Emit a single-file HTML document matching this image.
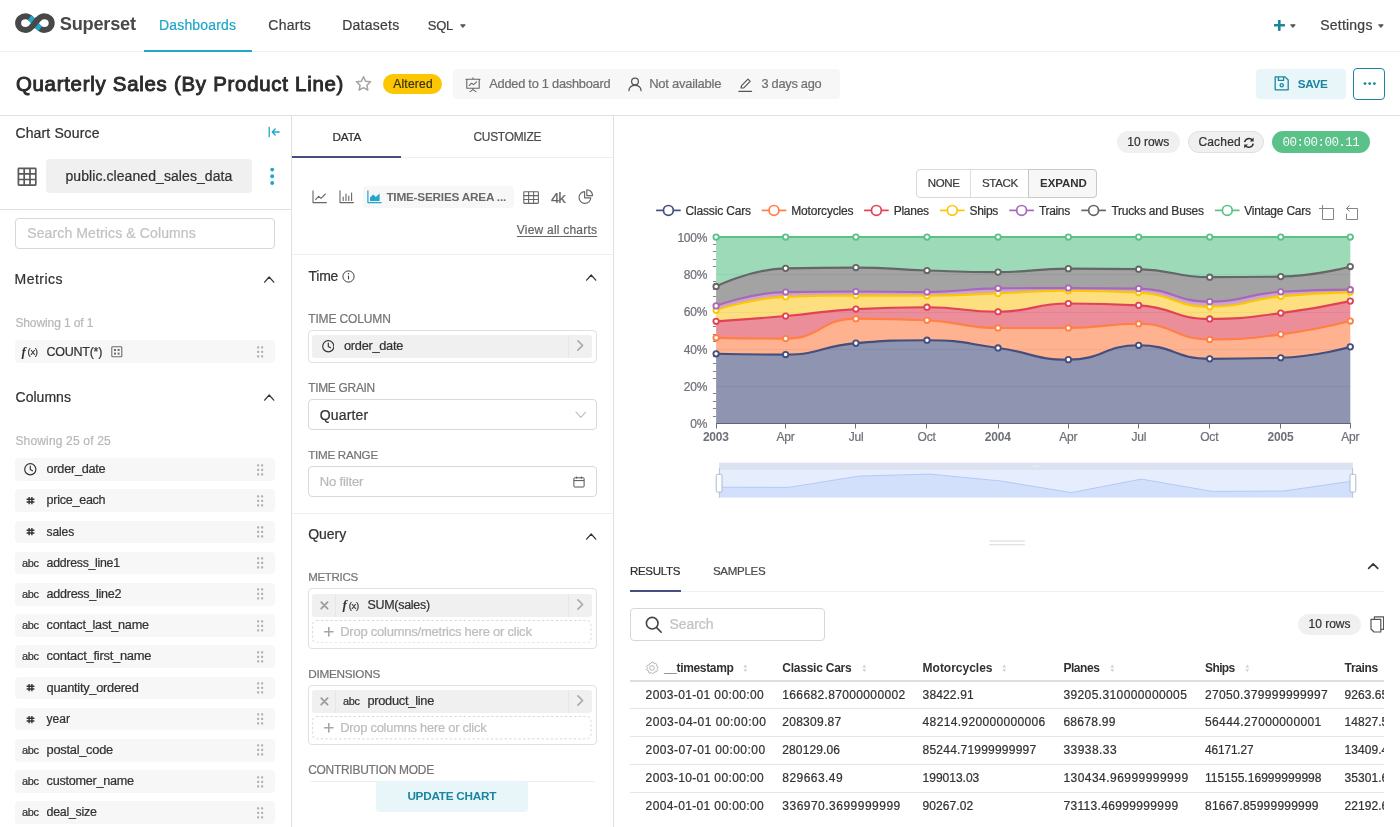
<!DOCTYPE html>
<html lang="en"><head><meta charset="utf-8"><title>Quarterly Sales (By Product Line) - Superset</title>
<style>
*{box-sizing:content-box;margin:0;padding:0}
html,body{width:1400px;height:827px;overflow:hidden;background:#fff}
body{position:relative;will-change:transform;font-family:"Liberation Sans",sans-serif;font-size:14px;color:#323232;-webkit-font-smoothing:antialiased}
.b{position:absolute;display:block}
.t{position:absolute;white-space:nowrap;display:block}
.s{-webkit-text-stroke:0.22px currentColor}
.clip{overflow:hidden}
</style></head>
<body>
<!-- s_nav.nav -->
<div class="b" style="left:0px;top:0px;width:1400px;height:51px;background:#fff;"></div>
<div class="b" style="left:0px;top:51px;width:1400px;height:1px;background:#f0f0f0;"></div>
<svg class="b" style="left:15px;top:13px;" width="40" height="20" viewBox="0 0 40 20"><g fill="none" stroke-width="6" stroke-linecap="butt"><path stroke="#484848" d="M19.9 10.1 C16.5 5.2 14 3.2 10.6 3.2 C6.4 3.2 3.1 6.2 3.1 10.1 C3.1 14 6.4 17 10.6 17 C14 17 16.5 15 19.9 10.1 C23.3 5.2 25.8 3.2 29.2 3.2 C33.4 3.2 36.7 6.2 36.7 10.1 C36.7 14 33.4 17 29.2 17 C25.8 17 23.3 15 19.9 10.1 Z"/><path stroke="#20a7c9" d="M14.6 4.6 C16.4 5.9 18 7.6 19.9 10.1 C21.8 12.6 23.4 14.3 25.2 15.6"/><path stroke="#484848" d="M16.6 13.9 C17.7 12.9 18.7 11.7 19.9 10.1 C21.1 8.5 22.1 7.3 23.2 6.3"/></g></svg>
<span class="t" style="left:59.80px;top:13.00px;font-size:18.24px;line-height:21px;color:#484848;font-weight:700;letter-spacing:-0.265px;">Superset</span>
<span class="t s" style="left:159.00px;top:17.00px;font-size:14px;line-height:16px;color:#20a7c9;letter-spacing:0.168px;">Dashboards</span>
<span class="t s" style="left:268.30px;top:17.00px;font-size:14px;line-height:16px;color:#404040;letter-spacing:0.253px;">Charts</span>
<span class="t s" style="left:342.20px;top:17.00px;font-size:14px;line-height:16px;color:#404040;letter-spacing:0.250px;">Datasets</span>
<span class="t s" style="left:427.80px;top:18.00px;font-size:13.04px;line-height:15px;color:#404040;letter-spacing:-0.314px;">SQL</span>
<svg class="b" style="left:459.6px;top:23.5px;" width="8" height="6" viewBox="0 0 8 6"><path d="M0.6 0.8 h4.6 l-2.3 2.7 z" fill="#555" stroke="#555" stroke-width="1" stroke-linejoin="round"/></svg>
<div class="b" style="left:144px;top:50px;width:108px;height:2px;background:#20a7c9;"></div>
<svg class="b" style="left:1273.5px;top:19.5px;" width="11" height="11" viewBox="0 0 11 11"><path d="M5.3 0.6 V10 M0.6 5.3 H10" stroke="#1a85a0" stroke-width="2.6" stroke-linecap="round" fill="none"/></svg>
<svg class="b" style="left:1290.2px;top:23.5px;" width="8" height="6" viewBox="0 0 8 6"><path d="M0.6 0.8 h4.6 l-2.3 2.7 z" fill="#555" stroke="#555" stroke-width="1" stroke-linejoin="round"/></svg>
<span class="t s" style="left:1320.20px;top:17.00px;font-size:14px;line-height:16px;color:#404040;letter-spacing:0.231px;">Settings</span>
<svg class="b" style="left:1378.4px;top:23.5px;" width="8" height="6" viewBox="0 0 8 6"><path d="M0.6 0.8 h4.6 l-2.3 2.7 z" fill="#555" stroke="#555" stroke-width="1" stroke-linejoin="round"/></svg>
<!-- s_nav.header -->
<div class="b" style="left:0px;top:52px;width:1400px;height:63px;background:#fff;"></div>
<div class="b" style="left:0px;top:115px;width:1400px;height:1px;background:#e0e0e0;"></div>
<span class="t" style="left:15.90px;top:73.00px;font-size:20.4px;line-height:22px;color:#2b2b2b;letter-spacing:0.743px;-webkit-text-stroke:0.95px #2b2b2b;">Quarterly Sales (By Product Line)</span>
<svg class="b" style="left:355px;top:75px;" width="17" height="17" viewBox="0 0 17 17"><path d="M8.5 1.7 L10.6 6.2 L15.5 6.8 L11.9 10.2 L12.8 15.1 L8.5 12.7 L4.2 15.1 L5.1 10.2 L1.5 6.8 L6.4 6.2 Z" fill="none" stroke="#a3a3a3" stroke-width="1.5" stroke-linejoin="round"/></svg>
<div class="b" style="left:383px;top:74px;width:59px;height:20px;background:#fcc700;border-radius:10px;"></div>
<span class="t s" style="left:393.20px;top:77.00px;font-size:12px;line-height:14px;color:#3a3112;letter-spacing:0.242px;">Altered</span>
<div class="b" style="left:453px;top:69px;width:387px;height:30px;background:#f7f7f7;border-radius:4px;"></div>
<svg class="b" style="left:465px;top:76.5px;" width="16" height="16" viewBox="0 0 16 16"><g fill="none" stroke="#666" stroke-width="1.1" stroke-linecap="round" stroke-linejoin="round"><path d="M8 0.7 V2.2 M1 2.2 H15 M1.8 2.2 V11.2 H14.2 V2.2 M8 11.2 V12.6 M8 12.6 L5 14.6 M8 12.6 L11 14.6"/><path d="M4.3 8.4 L6.6 6.2 L8.6 7.6 L11.6 4.8"/></g></svg>
<span class="t s" style="left:489.30px;top:76.00px;font-size:12.81px;line-height:15px;color:#707070;letter-spacing:-0.248px;">Added to 1 dashboard</span>
<svg class="b" style="left:627.6px;top:77px;" width="14" height="15" viewBox="0 0 14 15"><g fill="none" stroke="#555" stroke-width="1.25" stroke-linecap="round" stroke-linejoin="round"><circle cx="7" cy="4.4" r="3.4"/><path d="M0.9 13.6 C1.2 10.2 3.8 8.4 7 8.4 C10.2 8.4 12.8 10.2 13.1 13.6"/></g></svg>
<span class="t s" style="left:649.20px;top:76.00px;font-size:13px;line-height:15px;color:#707070;letter-spacing:-0.244px;">Not available</span>
<svg class="b" style="left:738px;top:77.6px;" width="15" height="15" viewBox="0 0 15 15"><g fill="none" stroke="#555" stroke-width="1.2" stroke-linecap="round" stroke-linejoin="round"><path d="M3 10 L3.6 7.6 L10 1.2 L12.2 3.4 L5.8 9.8 Z M0.8 13.3 H13.6"/></g></svg>
<span class="t s" style="left:761.40px;top:76.00px;font-size:12.81px;line-height:15px;color:#707070;letter-spacing:-0.255px;">3 days ago</span>
<div class="b" style="left:1256px;top:69px;width:89.5px;height:30px;background:#e9f6f9;border-radius:4px;"></div>
<svg class="b" style="left:1274px;top:75.8px;" width="16" height="15" viewBox="0 0 16 15"><g fill="none" stroke="#1a85a0" stroke-width="1.3" stroke-linejoin="round"><path d="M1.2 0.9 H11 L14.2 4 V13.8 H1.2 Z M4.4 0.9 V4.4 H9.6 V0.9"/><circle cx="7.7" cy="9.2" r="1.6"/></g></svg>
<span class="t" style="left:1297.70px;top:77.00px;font-size:11.72px;line-height:13px;color:#1a85a0;font-weight:700;letter-spacing:-0.309px;">SAVE</span>
<div class="b" style="left:1353px;top:68px;width:32px;height:32px;background:#fff;border-radius:4px;border:1px solid #1a85a0;box-sizing:border-box;"></div>
<svg class="b" style="left:1362.5px;top:82.3px;" width="14" height="4" viewBox="0 0 14 4"><circle cx="2" cy="1.6" r="1.4" fill="#1a85a0"/><circle cx="6.7" cy="1.6" r="1.4" fill="#1a85a0"/><circle cx="11.4" cy="1.6" r="1.4" fill="#1a85a0"/></svg>
<!-- s_left.left -->
<div class="b" style="left:0px;top:116px;width:291px;height:711px;background:#fff;"></div>
<div class="b" style="left:291px;top:116px;width:1px;height:711px;background:#e0e0e0;"></div>
<span class="t s" style="left:15.40px;top:125.00px;font-size:14px;line-height:16px;color:#323232;letter-spacing:0.146px;">Chart Source</span>
<svg class="b" style="left:268.3px;top:126.1px;" width="14" height="12" viewBox="0 0 14 12"><path d="M1.2 1.4 V10.6 M11.2 6 H4.4 M7.2 3 L4.2 6 L7.2 9" fill="none" stroke="#20a7c9" stroke-width="1.3" stroke-linecap="round" stroke-linejoin="round"/></svg>
<svg class="b" style="left:16.5px;top:167px;" width="20" height="19.5" viewBox="0 0 20 19.5"><g fill="none" stroke="#595959" stroke-width="1.7"><rect x="1.4" y="1.3" width="17.4" height="16.8" rx="0.6"/><path d="M7.2 1.3 V18.1 M13 1.3 V18.1 M1.4 6.9 H18.8 M1.4 12.5 H18.8"/></g></svg>
<div class="b" style="left:46px;top:159px;width:206px;height:33.5px;background:#f0f0f0;border-radius:4px;"></div>
<span class="t s" style="left:65.50px;top:168.00px;font-size:14px;line-height:16px;color:#323232;letter-spacing:0.074px;">public.cleaned_sales_data</span>
<svg class="b" style="left:269.5px;top:167.2px;" width="5" height="19" viewBox="0 0 5 19"><circle cx="2.2" cy="2.6" r="1.95" fill="#20a7c9"/><circle cx="2.2" cy="9.3" r="1.95" fill="#20a7c9"/><circle cx="2.2" cy="16" r="1.95" fill="#20a7c9"/></svg>
<div class="b" style="left:0px;top:209px;width:291px;height:1px;background:#e0e0e0;"></div>
<div class="b" style="left:15px;top:218px;width:258px;height:29px;background:#fff;border-radius:4px;border:1px solid #d6d6de;"></div>
<span class="t s" style="left:27.20px;top:225.00px;font-size:14px;line-height:16px;color:#c2c2c2;letter-spacing:0.125px;">Search Metrics &amp; Columns</span>
<span class="t s" style="left:14.60px;top:271.00px;font-size:14px;line-height:16px;color:#323232;letter-spacing:0.448px;">Metrics</span>
<svg class="b" style="left:263.4px;top:274.6px;" width="12.4" height="8.6" viewBox="0 0 12.4 8.6"><path d="M1.62 7.20 L6.20 1.98 L10.78 7.20" fill="none" stroke="#323232" stroke-width="1.23" stroke-linecap="round" stroke-linejoin="round"/></svg>
<span class="t s" style="left:15.40px;top:316.00px;font-size:12px;line-height:14px;color:#b8b8b8;letter-spacing:-0.101px;">Showing 1 of 1</span>
<div class="b" style="left:15px;top:340px;width:260px;height:23px;background:#f7f7f7;border-radius:4px;"></div>
<span class="t" style="left:21.40px;top:344.00px;font-size:13px;line-height:15px;color:#323232;font-weight:700;font-style:italic;font-family:'Liberation Serif',serif;">f</span><span class="t s" style="left:27.60px;top:346.00px;font-size:9.6px;line-height:11px;color:#323232;letter-spacing:-0.396px;">(x)</span>
<span class="t s" style="left:46.60px;top:345.00px;font-size:12.51px;line-height:14px;color:#323232;letter-spacing:-0.267px;">COUNT(*)</span>
<svg class="b" style="left:110.6px;top:345.6px;" width="12" height="12" viewBox="0 0 12 12"><g fill="none" stroke="#6c6c6c" stroke-width="1.1"><rect x="0.8" y="0.8" width="10" height="10" rx="0.8"/></g><g fill="#6c6c6c"><rect x="3" y="3" width="2" height="2"/><rect x="6.6" y="3" width="2" height="2"/><rect x="3" y="6.6" width="2" height="2"/><rect x="6.6" y="6.6" width="2" height="2"/></g></svg>
<svg class="b" style="left:256.8px;top:345.6px;" width="7" height="12" viewBox="0 0 7 12"><rect x="0.1" y="0.3" width="2.1" height="2.1" rx="0.6" fill="#aeaeae"/><rect x="0.1" y="4.8" width="2.1" height="2.1" rx="0.6" fill="#aeaeae"/><rect x="0.1" y="9.3" width="2.1" height="2.1" rx="0.6" fill="#aeaeae"/><rect x="4.1" y="0.3" width="2.1" height="2.1" rx="0.6" fill="#aeaeae"/><rect x="4.1" y="4.8" width="2.1" height="2.1" rx="0.6" fill="#aeaeae"/><rect x="4.1" y="9.3" width="2.1" height="2.1" rx="0.6" fill="#aeaeae"/></svg>
<span class="t s" style="left:15.50px;top:389.00px;font-size:14px;line-height:16px;color:#323232;letter-spacing:0.026px;">Columns</span>
<svg class="b" style="left:263.4px;top:392.9px;" width="12.4" height="8.6" viewBox="0 0 12.4 8.6"><path d="M1.62 7.20 L6.20 1.98 L10.78 7.20" fill="none" stroke="#323232" stroke-width="1.23" stroke-linecap="round" stroke-linejoin="round"/></svg>
<span class="t s" style="left:15.40px;top:434.00px;font-size:12px;line-height:14px;color:#b8b8b8;letter-spacing:0.169px;">Showing 25 of 25</span>
<div class="b" style="left:15px;top:458.2px;width:260px;height:22.5px;background:#f7f7f7;border-radius:4px;"></div>
<svg class="b" style="left:24px;top:463.2px;" width="12.6" height="12.6" viewBox="0 0 12.6 12.6"><g fill="none" stroke="#323232" stroke-width="1.15" stroke-linecap="round" stroke-linejoin="round"><circle cx="6.3" cy="6.3" r="5.6"/><path d="M6.3 3.2 V6.5 L8.5 7.8"/></g></svg>
<span class="t s" style="left:46.60px;top:461.00px;font-size:12.71px;line-height:15px;color:#323232;letter-spacing:-0.264px;">order_date</span>
<svg class="b" style="left:256.8px;top:463.59999999999997px;" width="7" height="12" viewBox="0 0 7 12"><rect x="0.1" y="0.3" width="2.1" height="2.1" rx="0.6" fill="#aeaeae"/><rect x="0.1" y="4.8" width="2.1" height="2.1" rx="0.6" fill="#aeaeae"/><rect x="0.1" y="9.3" width="2.1" height="2.1" rx="0.6" fill="#aeaeae"/><rect x="4.1" y="0.3" width="2.1" height="2.1" rx="0.6" fill="#aeaeae"/><rect x="4.1" y="4.8" width="2.1" height="2.1" rx="0.6" fill="#aeaeae"/><rect x="4.1" y="9.3" width="2.1" height="2.1" rx="0.6" fill="#aeaeae"/></svg>
<div class="b" style="left:15px;top:489.4px;width:260px;height:22.5px;background:#f7f7f7;border-radius:4px;"></div>
<svg class="b" style="left:26px;top:496.2px;" width="9" height="9" viewBox="0 0 9 9"><path d="M3.1 0.9 V8.3 M5.9 0.9 V8.3 M0.6 3.2 H8.4 M0.6 6 H8.4" fill="none" stroke="#323232" stroke-width="1.4"/></svg>
<span class="t s" style="left:46.60px;top:493.00px;font-size:12.57px;line-height:14px;color:#323232;letter-spacing:-0.274px;">price_each</span>
<svg class="b" style="left:256.8px;top:494.79999999999995px;" width="7" height="12" viewBox="0 0 7 12"><rect x="0.1" y="0.3" width="2.1" height="2.1" rx="0.6" fill="#aeaeae"/><rect x="0.1" y="4.8" width="2.1" height="2.1" rx="0.6" fill="#aeaeae"/><rect x="0.1" y="9.3" width="2.1" height="2.1" rx="0.6" fill="#aeaeae"/><rect x="4.1" y="0.3" width="2.1" height="2.1" rx="0.6" fill="#aeaeae"/><rect x="4.1" y="4.8" width="2.1" height="2.1" rx="0.6" fill="#aeaeae"/><rect x="4.1" y="9.3" width="2.1" height="2.1" rx="0.6" fill="#aeaeae"/></svg>
<div class="b" style="left:15px;top:520.6px;width:260px;height:22.5px;background:#f7f7f7;border-radius:4px;"></div>
<svg class="b" style="left:26px;top:527.4px;" width="9" height="9" viewBox="0 0 9 9"><path d="M3.1 0.9 V8.3 M5.9 0.9 V8.3 M0.6 3.2 H8.4 M0.6 6 H8.4" fill="none" stroke="#323232" stroke-width="1.4"/></svg>
<span class="t s" style="left:46.60px;top:525.00px;font-size:12.05px;line-height:14px;color:#323232;letter-spacing:-0.125px;">sales</span>
<svg class="b" style="left:256.8px;top:526.0px;" width="7" height="12" viewBox="0 0 7 12"><rect x="0.1" y="0.3" width="2.1" height="2.1" rx="0.6" fill="#aeaeae"/><rect x="0.1" y="4.8" width="2.1" height="2.1" rx="0.6" fill="#aeaeae"/><rect x="0.1" y="9.3" width="2.1" height="2.1" rx="0.6" fill="#aeaeae"/><rect x="4.1" y="0.3" width="2.1" height="2.1" rx="0.6" fill="#aeaeae"/><rect x="4.1" y="4.8" width="2.1" height="2.1" rx="0.6" fill="#aeaeae"/><rect x="4.1" y="9.3" width="2.1" height="2.1" rx="0.6" fill="#aeaeae"/></svg>
<div class="b" style="left:15px;top:551.8px;width:260px;height:22.5px;background:#f7f7f7;border-radius:4px;"></div>
<span class="t s" style="left:22.10px;top:557.00px;font-size:10.99px;line-height:12px;color:#323232;letter-spacing:-0.359px;">abc</span>
<span class="t s" style="left:46.60px;top:556.00px;font-size:12.34px;line-height:14px;color:#323232;letter-spacing:-0.275px;">address_line1</span>
<svg class="b" style="left:256.8px;top:557.1999999999999px;" width="7" height="12" viewBox="0 0 7 12"><rect x="0.1" y="0.3" width="2.1" height="2.1" rx="0.6" fill="#aeaeae"/><rect x="0.1" y="4.8" width="2.1" height="2.1" rx="0.6" fill="#aeaeae"/><rect x="0.1" y="9.3" width="2.1" height="2.1" rx="0.6" fill="#aeaeae"/><rect x="4.1" y="0.3" width="2.1" height="2.1" rx="0.6" fill="#aeaeae"/><rect x="4.1" y="4.8" width="2.1" height="2.1" rx="0.6" fill="#aeaeae"/><rect x="4.1" y="9.3" width="2.1" height="2.1" rx="0.6" fill="#aeaeae"/></svg>
<div class="b" style="left:15px;top:583.0px;width:260px;height:22.5px;background:#f7f7f7;border-radius:4px;"></div>
<span class="t s" style="left:22.10px;top:588.00px;font-size:10.99px;line-height:12px;color:#323232;letter-spacing:-0.359px;">abc</span>
<span class="t s" style="left:46.60px;top:587.00px;font-size:12.55px;line-height:14px;color:#323232;letter-spacing:-0.270px;">address_line2</span>
<svg class="b" style="left:256.8px;top:588.4px;" width="7" height="12" viewBox="0 0 7 12"><rect x="0.1" y="0.3" width="2.1" height="2.1" rx="0.6" fill="#aeaeae"/><rect x="0.1" y="4.8" width="2.1" height="2.1" rx="0.6" fill="#aeaeae"/><rect x="0.1" y="9.3" width="2.1" height="2.1" rx="0.6" fill="#aeaeae"/><rect x="4.1" y="0.3" width="2.1" height="2.1" rx="0.6" fill="#aeaeae"/><rect x="4.1" y="4.8" width="2.1" height="2.1" rx="0.6" fill="#aeaeae"/><rect x="4.1" y="9.3" width="2.1" height="2.1" rx="0.6" fill="#aeaeae"/></svg>
<div class="b" style="left:15px;top:614.2px;width:260px;height:22.5px;background:#f7f7f7;border-radius:4px;"></div>
<span class="t s" style="left:22.10px;top:619.00px;font-size:10.99px;line-height:12px;color:#323232;letter-spacing:-0.359px;">abc</span>
<span class="t s" style="left:46.60px;top:618.00px;font-size:12.7px;line-height:14px;color:#323232;letter-spacing:-0.253px;">contact_last_name</span>
<svg class="b" style="left:256.8px;top:619.6px;" width="7" height="12" viewBox="0 0 7 12"><rect x="0.1" y="0.3" width="2.1" height="2.1" rx="0.6" fill="#aeaeae"/><rect x="0.1" y="4.8" width="2.1" height="2.1" rx="0.6" fill="#aeaeae"/><rect x="0.1" y="9.3" width="2.1" height="2.1" rx="0.6" fill="#aeaeae"/><rect x="4.1" y="0.3" width="2.1" height="2.1" rx="0.6" fill="#aeaeae"/><rect x="4.1" y="4.8" width="2.1" height="2.1" rx="0.6" fill="#aeaeae"/><rect x="4.1" y="9.3" width="2.1" height="2.1" rx="0.6" fill="#aeaeae"/></svg>
<div class="b" style="left:15px;top:645.4px;width:260px;height:22.5px;background:#f7f7f7;border-radius:4px;"></div>
<span class="t s" style="left:22.10px;top:650.00px;font-size:10.99px;line-height:12px;color:#323232;letter-spacing:-0.359px;">abc</span>
<span class="t s" style="left:46.60px;top:648.00px;font-size:12.92px;line-height:15px;color:#323232;letter-spacing:-0.245px;">contact_first_name</span>
<svg class="b" style="left:256.8px;top:650.8px;" width="7" height="12" viewBox="0 0 7 12"><rect x="0.1" y="0.3" width="2.1" height="2.1" rx="0.6" fill="#aeaeae"/><rect x="0.1" y="4.8" width="2.1" height="2.1" rx="0.6" fill="#aeaeae"/><rect x="0.1" y="9.3" width="2.1" height="2.1" rx="0.6" fill="#aeaeae"/><rect x="4.1" y="0.3" width="2.1" height="2.1" rx="0.6" fill="#aeaeae"/><rect x="4.1" y="4.8" width="2.1" height="2.1" rx="0.6" fill="#aeaeae"/><rect x="4.1" y="9.3" width="2.1" height="2.1" rx="0.6" fill="#aeaeae"/></svg>
<div class="b" style="left:15px;top:676.6px;width:260px;height:22.5px;background:#f7f7f7;border-radius:4px;"></div>
<svg class="b" style="left:26px;top:683.4px;" width="9" height="9" viewBox="0 0 9 9"><path d="M3.1 0.9 V8.3 M5.9 0.9 V8.3 M0.6 3.2 H8.4 M0.6 6 H8.4" fill="none" stroke="#323232" stroke-width="1.4"/></svg>
<span class="t s" style="left:46.60px;top:680.00px;font-size:12.8px;line-height:15px;color:#323232;letter-spacing:-0.255px;">quantity_ordered</span>
<svg class="b" style="left:256.8px;top:682.0px;" width="7" height="12" viewBox="0 0 7 12"><rect x="0.1" y="0.3" width="2.1" height="2.1" rx="0.6" fill="#aeaeae"/><rect x="0.1" y="4.8" width="2.1" height="2.1" rx="0.6" fill="#aeaeae"/><rect x="0.1" y="9.3" width="2.1" height="2.1" rx="0.6" fill="#aeaeae"/><rect x="4.1" y="0.3" width="2.1" height="2.1" rx="0.6" fill="#aeaeae"/><rect x="4.1" y="4.8" width="2.1" height="2.1" rx="0.6" fill="#aeaeae"/><rect x="4.1" y="9.3" width="2.1" height="2.1" rx="0.6" fill="#aeaeae"/></svg>
<div class="b" style="left:15px;top:707.8px;width:260px;height:22.5px;background:#f7f7f7;border-radius:4px;"></div>
<svg class="b" style="left:26px;top:714.5999999999999px;" width="9" height="9" viewBox="0 0 9 9"><path d="M3.1 0.9 V8.3 M5.9 0.9 V8.3 M0.6 3.2 H8.4 M0.6 6 H8.4" fill="none" stroke="#323232" stroke-width="1.4"/></svg>
<span class="t s" style="left:46.60px;top:712.00px;font-size:12.04px;line-height:14px;color:#323232;letter-spacing:-0.033px;">year</span>
<svg class="b" style="left:256.8px;top:713.1999999999999px;" width="7" height="12" viewBox="0 0 7 12"><rect x="0.1" y="0.3" width="2.1" height="2.1" rx="0.6" fill="#aeaeae"/><rect x="0.1" y="4.8" width="2.1" height="2.1" rx="0.6" fill="#aeaeae"/><rect x="0.1" y="9.3" width="2.1" height="2.1" rx="0.6" fill="#aeaeae"/><rect x="4.1" y="0.3" width="2.1" height="2.1" rx="0.6" fill="#aeaeae"/><rect x="4.1" y="4.8" width="2.1" height="2.1" rx="0.6" fill="#aeaeae"/><rect x="4.1" y="9.3" width="2.1" height="2.1" rx="0.6" fill="#aeaeae"/></svg>
<div class="b" style="left:15px;top:739.0px;width:260px;height:22.5px;background:#f7f7f7;border-radius:4px;"></div>
<span class="t s" style="left:22.10px;top:744.00px;font-size:10.99px;line-height:12px;color:#323232;letter-spacing:-0.359px;">abc</span>
<span class="t s" style="left:46.60px;top:742.00px;font-size:12.82px;line-height:15px;color:#323232;letter-spacing:-0.257px;">postal_code</span>
<svg class="b" style="left:256.8px;top:744.4px;" width="7" height="12" viewBox="0 0 7 12"><rect x="0.1" y="0.3" width="2.1" height="2.1" rx="0.6" fill="#aeaeae"/><rect x="0.1" y="4.8" width="2.1" height="2.1" rx="0.6" fill="#aeaeae"/><rect x="0.1" y="9.3" width="2.1" height="2.1" rx="0.6" fill="#aeaeae"/><rect x="4.1" y="0.3" width="2.1" height="2.1" rx="0.6" fill="#aeaeae"/><rect x="4.1" y="4.8" width="2.1" height="2.1" rx="0.6" fill="#aeaeae"/><rect x="4.1" y="9.3" width="2.1" height="2.1" rx="0.6" fill="#aeaeae"/></svg>
<div class="b" style="left:15px;top:770.2px;width:260px;height:22.5px;background:#f7f7f7;border-radius:4px;"></div>
<span class="t s" style="left:22.10px;top:775.00px;font-size:10.99px;line-height:12px;color:#323232;letter-spacing:-0.359px;">abc</span>
<span class="t s" style="left:46.60px;top:774.00px;font-size:12.65px;line-height:14px;color:#323232;letter-spacing:-0.259px;">customer_name</span>
<svg class="b" style="left:256.8px;top:775.6px;" width="7" height="12" viewBox="0 0 7 12"><rect x="0.1" y="0.3" width="2.1" height="2.1" rx="0.6" fill="#aeaeae"/><rect x="0.1" y="4.8" width="2.1" height="2.1" rx="0.6" fill="#aeaeae"/><rect x="0.1" y="9.3" width="2.1" height="2.1" rx="0.6" fill="#aeaeae"/><rect x="4.1" y="0.3" width="2.1" height="2.1" rx="0.6" fill="#aeaeae"/><rect x="4.1" y="4.8" width="2.1" height="2.1" rx="0.6" fill="#aeaeae"/><rect x="4.1" y="9.3" width="2.1" height="2.1" rx="0.6" fill="#aeaeae"/></svg>
<div class="b" style="left:15px;top:801.4px;width:260px;height:22.5px;background:#f7f7f7;border-radius:4px;"></div>
<span class="t s" style="left:22.10px;top:806.00px;font-size:10.99px;line-height:12px;color:#323232;letter-spacing:-0.359px;">abc</span>
<span class="t s" style="left:46.60px;top:805.00px;font-size:12.43px;line-height:14px;color:#323232;letter-spacing:-0.284px;">deal_size</span>
<svg class="b" style="left:256.8px;top:806.8px;" width="7" height="12" viewBox="0 0 7 12"><rect x="0.1" y="0.3" width="2.1" height="2.1" rx="0.6" fill="#aeaeae"/><rect x="0.1" y="4.8" width="2.1" height="2.1" rx="0.6" fill="#aeaeae"/><rect x="0.1" y="9.3" width="2.1" height="2.1" rx="0.6" fill="#aeaeae"/><rect x="4.1" y="0.3" width="2.1" height="2.1" rx="0.6" fill="#aeaeae"/><rect x="4.1" y="4.8" width="2.1" height="2.1" rx="0.6" fill="#aeaeae"/><rect x="4.1" y="9.3" width="2.1" height="2.1" rx="0.6" fill="#aeaeae"/></svg>
<!-- s_mid.mid -->
<div class="b" style="left:292px;top:116px;width:321px;height:711px;background:#fff;"></div>
<div class="b" style="left:613px;top:116px;width:1px;height:711px;background:#e0e0e0;"></div>
<div class="b" style="left:292px;top:157px;width:321px;height:1px;background:#f0f0f0;"></div>
<div class="b" style="left:292px;top:156px;width:109px;height:2px;background:#454e7c;"></div>
<span class="t s" style="left:332.60px;top:130.00px;font-size:11.81px;line-height:14px;color:#2f2f2f;letter-spacing:-0.280px;">DATA</span>
<span class="t s" style="left:473.50px;top:130.00px;font-size:11.91px;line-height:14px;color:#4a4a4a;letter-spacing:-0.257px;">CUSTOMIZE</span>
<svg class="b" style="left:311.6px;top:190.2px;" width="15.5" height="14" viewBox="0 0 15.5 14"><g fill="none" stroke="#666" stroke-width="1.1" stroke-linecap="round" stroke-linejoin="round"><path d="M1 0.8 V12.6 H14.4"/><path d="M3.6 9.6 L6.6 6.4 L9 8.4 L13.4 4"/></g></svg>
<svg class="b" style="left:339.4px;top:190.2px;" width="15.5" height="14" viewBox="0 0 15.5 14"><g fill="none" stroke="#666" stroke-width="1.1" stroke-linecap="round"><path d="M1 0.8 V12.6 H14.4" stroke-linejoin="round"/><path d="M4.2 10.4 V7 M7 10.4 V4 M9.8 10.4 V6 M12.6 10.4 V3"/></g></svg>
<div class="b" style="left:362.8px;top:186px;width:151.6px;height:22.2px;background:#f7f7f7;border-radius:4px;"></div>
<svg class="b" style="left:366.6px;top:190.2px;" width="15" height="14" viewBox="0 0 15 14"><path d="M0.9 0.8 V12.6 H14.2" fill="none" stroke="#20a7c9" stroke-width="1.2" stroke-linecap="round" stroke-linejoin="round"/><path d="M3 11 V7.6 L6.2 4.4 L8.8 7 L12.6 3.4 V11 Z" fill="#20a7c9"/></svg>
<span class="t" style="left:386.40px;top:190.00px;font-size:11.82px;line-height:14px;color:#6a6a6a;font-weight:700;letter-spacing:-0.246px;">TIME-SERIES AREA ...</span>
<svg class="b" style="left:523px;top:190.6px;" width="16.4" height="13.4" viewBox="0 0 16.4 13.4"><g fill="none" stroke="#666" stroke-width="1.1"><rect x="0.8" y="0.8" width="14.6" height="11.6" rx="0.6"/><path d="M0.8 4.6 H15.4 M0.8 8.5 H15.4 M5.6 0.8 V12.4 M10.6 0.8 V12.4"/></g></svg>
<span class="t s" style="left:551.00px;top:189.00px;font-size:14.97px;line-height:17px;color:#666;letter-spacing:-1.025px;">4k</span>
<svg class="b" style="left:578.4px;top:189.4px;" width="16" height="16" viewBox="0 0 16 16"><g fill="none" stroke="#666" stroke-width="1.15" stroke-linejoin="round"><path d="M6.6 2.6 A5.9 5.9 0 1 0 12.8 8.8 H6.6 Z"/><path d="M8.8 0.8 A5.9 5.9 0 0 1 14.6 6.6 H8.8 Z"/></g></svg>
<span class="t s" style="left:516.80px;top:223.00px;font-size:12px;line-height:14px;color:#666;letter-spacing:0.218px;text-decoration:underline;text-underline-offset:2px;">View all charts</span>
<div class="b" style="left:292px;top:254px;width:321px;height:1px;background:#f0f0f0;"></div>
<span class="t s" style="left:308.60px;top:268.00px;font-size:13.98px;line-height:16px;color:#323232;letter-spacing:-0.251px;">Time</span>
<svg class="b" style="left:342px;top:270px;" width="13" height="13" viewBox="0 0 13 13"><g fill="none" stroke="#3a3a3a" stroke-width="1"><circle cx="6.5" cy="6.5" r="5.6"/></g><path d="M6.5 5.6 V9.4" stroke="#3a3a3a" stroke-width="1.1" fill="none"/><circle cx="6.5" cy="3.8" r="0.7" fill="#3a3a3a"/></svg>
<svg class="b" style="left:585px;top:273.2px;" width="12.4" height="8.6" viewBox="0 0 12.4 8.6"><path d="M1.62 7.20 L6.20 1.98 L10.78 7.20" fill="none" stroke="#323232" stroke-width="1.23" stroke-linecap="round" stroke-linejoin="round"/></svg>
<span class="t s" style="left:308.20px;top:312.00px;font-size:12px;line-height:14px;color:#757575;letter-spacing:-0.133px;">TIME COLUMN</span>
<div class="b" style="left:307.5px;top:330px;width:287px;height:30.6px;background:#fff;border-radius:4px;border:1px solid #e0e0e0;"></div>
<div class="b" style="left:312.2px;top:335px;width:279.6px;height:23px;background:#f0f0f0;border-radius:3px;"></div>
<div class="b" style="left:568px;top:335px;width:1px;height:23px;background:#e7e7e7;"></div>
<svg class="b" style="left:576.0px;top:339.2px;" width="9" height="14" viewBox="0 0 9 14"><path d="M1.9 1.9 L6.6 6.5 L1.9 11.1" fill="none" stroke="#a8a8a8" stroke-width="1.6" stroke-linecap="round" stroke-linejoin="round"/></svg>
<svg class="b" style="left:321.8px;top:340px;" width="12.6" height="12.6" viewBox="0 0 12.6 12.6"><g fill="none" stroke="#323232" stroke-width="1.15" stroke-linecap="round" stroke-linejoin="round"><circle cx="6.3" cy="6.3" r="5.6"/><path d="M6.3 3.2 V6.5 L8.5 7.8"/></g></svg>
<span class="t s" style="left:344.00px;top:338.00px;font-size:12.75px;line-height:15px;color:#323232;letter-spacing:-0.264px;">order_date</span>
<span class="t s" style="left:308.20px;top:381.00px;font-size:11.88px;line-height:14px;color:#757575;letter-spacing:-0.255px;">TIME GRAIN</span>
<div class="b" style="left:307.5px;top:399.3px;width:287px;height:28.4px;background:#fff;border-radius:4px;border:1px solid #d9d9d9;"></div>
<span class="t s" style="left:319.80px;top:407.00px;font-size:14px;line-height:16px;color:#323232;letter-spacing:0.133px;">Quarter</span>
<svg class="b" style="left:575px;top:410.6px;" width="12" height="8" viewBox="0 0 12 8"><path d="M1 1.2 L5.8 6.4 L10.6 1.2" fill="none" stroke="#bdbdbd" stroke-width="1.1" stroke-linecap="round" stroke-linejoin="round"/></svg>
<span class="t s" style="left:308.20px;top:448.00px;font-size:11.64px;line-height:13px;color:#757575;letter-spacing:-0.265px;">TIME RANGE</span>
<div class="b" style="left:307.5px;top:466.4px;width:287px;height:28.4px;background:#fff;border-radius:4px;border:1px solid #d9d9d9;"></div>
<span class="t s" style="left:319.80px;top:474.00px;font-size:13px;line-height:15px;color:#b9b9b9;letter-spacing:-0.157px;">No filter</span>
<svg class="b" style="left:572.6px;top:476px;" width="12" height="12" viewBox="0 0 12 12"><g fill="none" stroke="#555" stroke-width="1"><rect x="0.9" y="1.8" width="10.2" height="9.2" rx="0.8"/><path d="M0.9 4.6 H11.1 M3.6 0.6 V2.6 M8.4 0.6 V2.6"/></g></svg>
<div class="b" style="left:292px;top:513px;width:321px;height:1px;background:#f0f0f0;"></div>
<span class="t s" style="left:308.20px;top:526.00px;font-size:14px;line-height:16px;color:#323232;letter-spacing:-0.031px;">Query</span>
<svg class="b" style="left:585px;top:531.6px;" width="12.4" height="8.6" viewBox="0 0 12.4 8.6"><path d="M1.62 7.20 L6.20 1.98 L10.78 7.20" fill="none" stroke="#323232" stroke-width="1.23" stroke-linecap="round" stroke-linejoin="round"/></svg>
<span class="t s" style="left:308.20px;top:571.00px;font-size:11.49px;line-height:12px;color:#757575;letter-spacing:-0.303px;">METRICS</span>
<div class="b" style="left:307.5px;top:588.2px;width:287px;height:58.8px;background:#fff;border-radius:4px;border:1px solid #e0e0e0;"></div>
<div class="b" style="left:312.2px;top:593.8px;width:279.6px;height:23px;background:#f0f0f0;border-radius:3px;"></div>
<div class="b" style="left:568px;top:593.8px;width:1px;height:23px;background:#e7e7e7;"></div>
<svg class="b" style="left:576.0px;top:598.0px;" width="9" height="14" viewBox="0 0 9 14"><path d="M1.9 1.9 L6.6 6.5 L1.9 11.1" fill="none" stroke="#a8a8a8" stroke-width="1.6" stroke-linecap="round" stroke-linejoin="round"/></svg>
<div class="b" style="left:335px;top:593.8px;width:1px;height:23px;background:#e7e7e7;"></div>
<svg class="b" style="left:319.5px;top:600.8px;" width="9" height="9" viewBox="0 0 9 9"><path d="M1.2 1.2 L7.6 7.6 M7.6 1.2 L1.2 7.6" fill="none" stroke="#9a9a9a" stroke-width="1.7" stroke-linecap="round"/></svg>
<span class="t" style="left:342.60px;top:597.00px;font-size:13px;line-height:15px;color:#323232;font-weight:700;font-style:italic;font-family:'Liberation Serif',serif;">f</span><span class="t s" style="left:348.80px;top:600.00px;font-size:9.6px;line-height:11px;color:#323232;letter-spacing:-0.396px;">(x)</span>
<span class="t s" style="left:367.40px;top:598.00px;font-size:12.48px;line-height:14px;color:#323232;letter-spacing:-0.263px;">SUM(sales)</span>
<svg class="b" style="left:312.4px;top:620px;" width="279.6" height="23.4" viewBox="0 0 279.6 23.4"><rect x="0.5" y="0.5" width="278.6" height="22.4" rx="4" fill="none" stroke="#d9d9d9" stroke-width="1" stroke-dasharray="2.4 2.2"/></svg>
<svg class="b" style="left:324.2px;top:627px;" width="10" height="10" viewBox="0 0 10 10"><path d="M4.8 0.6 V9 M0.6 4.8 H9" fill="none" stroke="#a6a6a6" stroke-width="1.6" stroke-linecap="round"/></svg>
<span class="t s" style="left:340.20px;top:624.00px;font-size:13px;line-height:15px;color:#bdbdbd;letter-spacing:-0.233px;">Drop columns/metrics here or click</span>
<span class="t s" style="left:308.20px;top:667.00px;font-size:11.75px;line-height:13px;color:#757575;letter-spacing:-0.265px;">DIMENSIONS</span>
<div class="b" style="left:307.5px;top:684.6px;width:287px;height:58.6px;background:#fff;border-radius:4px;border:1px solid #e0e0e0;"></div>
<div class="b" style="left:312.2px;top:689.6px;width:279.6px;height:23px;background:#f0f0f0;border-radius:3px;"></div>
<div class="b" style="left:568px;top:689.6px;width:1px;height:23px;background:#e7e7e7;"></div>
<svg class="b" style="left:576.0px;top:693.8000000000001px;" width="9" height="14" viewBox="0 0 9 14"><path d="M1.9 1.9 L6.6 6.5 L1.9 11.1" fill="none" stroke="#a8a8a8" stroke-width="1.6" stroke-linecap="round" stroke-linejoin="round"/></svg>
<div class="b" style="left:335px;top:689.6px;width:1px;height:23px;background:#e7e7e7;"></div>
<svg class="b" style="left:319.5px;top:696.6px;" width="9" height="9" viewBox="0 0 9 9"><path d="M1.2 1.2 L7.6 7.6 M7.6 1.2 L1.2 7.6" fill="none" stroke="#9a9a9a" stroke-width="1.7" stroke-linecap="round"/></svg>
<span class="t s" style="left:343.00px;top:695.00px;font-size:10.99px;line-height:12px;color:#323232;letter-spacing:-0.359px;">abc</span>
<span class="t s" style="left:367.40px;top:693.00px;font-size:12.81px;line-height:15px;color:#323232;letter-spacing:-0.255px;">product_line</span>
<svg class="b" style="left:312.4px;top:716.4px;" width="279.6" height="23.4" viewBox="0 0 279.6 23.4"><rect x="0.5" y="0.5" width="278.6" height="22.4" rx="4" fill="none" stroke="#d9d9d9" stroke-width="1" stroke-dasharray="2.4 2.2"/></svg>
<svg class="b" style="left:324.2px;top:723.4px;" width="10" height="10" viewBox="0 0 10 10"><path d="M4.8 0.6 V9 M0.6 4.8 H9" fill="none" stroke="#a6a6a6" stroke-width="1.6" stroke-linecap="round"/></svg>
<span class="t s" style="left:340.20px;top:720.00px;font-size:12.9px;line-height:15px;color:#bdbdbd;letter-spacing:-0.246px;">Drop columns here or click</span>
<span class="t s" style="left:308.20px;top:763.00px;font-size:11.94px;line-height:14px;color:#757575;letter-spacing:-0.251px;">CONTRIBUTION MODE</span>
<div class="b" style="left:307.5px;top:780.6px;width:287px;height:30px;background:#fff;border-radius:4px;border:1px solid #ececec;"></div>
<div class="b" style="left:292px;top:781.6px;width:321px;height:46px;background:#fff;"></div>
<div class="b" style="left:376.4px;top:781px;width:151.8px;height:31px;background:#e9f6f9;border-radius:4px;"></div>
<span class="t" style="left:407.40px;top:789.00px;font-size:11.76px;line-height:13px;color:#1a85a0;font-weight:700;letter-spacing:-0.258px;">UPDATE CHART</span>
<!-- s_right.right -->
<div class="b" style="left:614px;top:116px;width:786px;height:711px;background:#fff;"></div>
<div class="b" style="left:1116.6px;top:131px;width:63.2px;height:22px;background:#f0f0f0;border-radius:11px;"></div>
<span class="t s" style="left:1127.30px;top:135.00px;font-size:12px;line-height:14px;color:#323232;letter-spacing:-0.020px;">10 rows</span>
<div class="b" style="left:1187.6px;top:131px;width:74.6px;height:20px;background:#f0f0f0;border-radius:11px;border:1px solid #e0e0e0;"></div>
<span class="t s" style="left:1198.40px;top:135.00px;font-size:12px;line-height:14px;color:#323232;letter-spacing:0.182px;">Cached</span>
<svg class="b" style="left:1243.4px;top:136.6px;" width="12" height="12" viewBox="0 0 12 12"><g fill="none" stroke="#323232" stroke-width="1.5"><path d="M1.6 5.2 A4.4 4.4 0 0 1 9.4 3.2"/><path d="M10.2 6.6 A4.4 4.4 0 0 1 2.4 8.6"/></g><path d="M10.6 0.6 V4.4 H6.8 Z M1.2 11.2 V7.4 H5 Z" fill="#323232"/></svg>
<div class="b" style="left:1272px;top:131px;width:98.2px;height:22px;background:#5ac189;border-radius:11px;"></div>
<span class="t" style="left:1282.60px;top:136.00px;font-size:12.5px;line-height:14px;color:#f4fbf7;font-family:'Liberation Mono',monospace;letter-spacing:-0.531px;">00:00:00.11</span>
<div class="b" style="left:916.4px;top:169.2px;width:179px;height:26.6px;background:#fff;border-radius:4px;border:1px solid #d9d9d9;"></div>
<div class="b" style="left:970px;top:170px;width:1px;height:27px;background:#dedede;"></div>
<div class="b" style="left:1028px;top:169.2px;width:67.4px;height:26.6px;background:#f7f7f7;border-radius:0 4px 4px 0;border:1px solid #c8c8c8;"></div>
<span class="t s" style="left:927.80px;top:177.00px;font-size:11.51px;line-height:12px;color:#3a3a3a;letter-spacing:-0.352px;">NONE</span>
<span class="t s" style="left:981.90px;top:177.00px;font-size:11.57px;line-height:12px;color:#3a3a3a;letter-spacing:-0.320px;">STACK</span>
<span class="t" style="left:1040.10px;top:177.00px;font-size:11.54px;line-height:12px;color:#323232;font-weight:700;letter-spacing:-0.114px;">EXPAND</span>
<svg class="b" style="left:614px;top:200px;" width="786" height="305" viewBox="614 200 786 305"><line x1="716.1" x2="1350.3" y1="386.5" y2="386.5" stroke="#e0e6f1" stroke-opacity="0.8" stroke-width="1"/>
<line x1="716.1" x2="1350.3" y1="349.5" y2="349.5" stroke="#e0e6f1" stroke-opacity="0.8" stroke-width="1"/>
<line x1="716.1" x2="1350.3" y1="312.5" y2="312.5" stroke="#e0e6f1" stroke-opacity="0.8" stroke-width="1"/>
<line x1="716.1" x2="1350.3" y1="274.5" y2="274.5" stroke="#e0e6f1" stroke-opacity="0.8" stroke-width="1"/>
<line x1="716.1" x2="1350.3" y1="237.5" y2="237.5" stroke="#e0e6f1" stroke-opacity="0.8" stroke-width="1"/>
<line x1="716.1" x2="1350.3" y1="423.5" y2="423.5" stroke="#6e7079" stroke-width="1"/>
<line x1="716.5" x2="716.5" y1="423.0" y2="428.5" stroke="#6e7079" stroke-width="1"/>
<line x1="785.5" x2="785.5" y1="423.0" y2="428.5" stroke="#6e7079" stroke-width="1"/>
<line x1="855.5" x2="855.5" y1="423.0" y2="428.5" stroke="#6e7079" stroke-width="1"/>
<line x1="926.5" x2="926.5" y1="423.0" y2="428.5" stroke="#6e7079" stroke-width="1"/>
<line x1="998.5" x2="998.5" y1="423.0" y2="428.5" stroke="#6e7079" stroke-width="1"/>
<line x1="1068.5" x2="1068.5" y1="423.0" y2="428.5" stroke="#6e7079" stroke-width="1"/>
<line x1="1138.5" x2="1138.5" y1="423.0" y2="428.5" stroke="#6e7079" stroke-width="1"/>
<line x1="1209.5" x2="1209.5" y1="423.0" y2="428.5" stroke="#6e7079" stroke-width="1"/>
<line x1="1280.5" x2="1280.5" y1="423.0" y2="428.5" stroke="#6e7079" stroke-width="1"/>
<line x1="1350.5" x2="1350.5" y1="423.0" y2="428.5" stroke="#6e7079" stroke-width="1"/>
<line x1="712.9" x2="716.1" y1="416.5" y2="416.5" stroke="#6e7079" stroke-opacity="0.85" stroke-width="1"/>
<line x1="712.9" x2="716.1" y1="408.5" y2="408.5" stroke="#6e7079" stroke-opacity="0.85" stroke-width="1"/>
<line x1="712.9" x2="716.1" y1="401.5" y2="401.5" stroke="#6e7079" stroke-opacity="0.85" stroke-width="1"/>
<line x1="712.9" x2="716.1" y1="393.5" y2="393.5" stroke="#6e7079" stroke-opacity="0.85" stroke-width="1"/>
<line x1="712.9" x2="716.1" y1="378.5" y2="378.5" stroke="#6e7079" stroke-opacity="0.85" stroke-width="1"/>
<line x1="712.9" x2="716.1" y1="371.5" y2="371.5" stroke="#6e7079" stroke-opacity="0.85" stroke-width="1"/>
<line x1="712.9" x2="716.1" y1="363.5" y2="363.5" stroke="#6e7079" stroke-opacity="0.85" stroke-width="1"/>
<line x1="712.9" x2="716.1" y1="356.5" y2="356.5" stroke="#6e7079" stroke-opacity="0.85" stroke-width="1"/>
<line x1="712.9" x2="716.1" y1="341.5" y2="341.5" stroke="#6e7079" stroke-opacity="0.85" stroke-width="1"/>
<line x1="712.9" x2="716.1" y1="334.5" y2="334.5" stroke="#6e7079" stroke-opacity="0.85" stroke-width="1"/>
<line x1="712.9" x2="716.1" y1="326.5" y2="326.5" stroke="#6e7079" stroke-opacity="0.85" stroke-width="1"/>
<line x1="712.9" x2="716.1" y1="319.5" y2="319.5" stroke="#6e7079" stroke-opacity="0.85" stroke-width="1"/>
<line x1="712.9" x2="716.1" y1="304.5" y2="304.5" stroke="#6e7079" stroke-opacity="0.85" stroke-width="1"/>
<line x1="712.9" x2="716.1" y1="296.5" y2="296.5" stroke="#6e7079" stroke-opacity="0.85" stroke-width="1"/>
<line x1="712.9" x2="716.1" y1="289.5" y2="289.5" stroke="#6e7079" stroke-opacity="0.85" stroke-width="1"/>
<line x1="712.9" x2="716.1" y1="281.5" y2="281.5" stroke="#6e7079" stroke-opacity="0.85" stroke-width="1"/>
<line x1="712.9" x2="716.1" y1="266.5" y2="266.5" stroke="#6e7079" stroke-opacity="0.85" stroke-width="1"/>
<line x1="712.9" x2="716.1" y1="259.5" y2="259.5" stroke="#6e7079" stroke-opacity="0.85" stroke-width="1"/>
<line x1="712.9" x2="716.1" y1="251.5" y2="251.5" stroke="#6e7079" stroke-opacity="0.85" stroke-width="1"/>
<line x1="712.9" x2="716.1" y1="244.5" y2="244.5" stroke="#6e7079" stroke-opacity="0.85" stroke-width="1"/>
<path d="M716.1 353.79 C716.1 353.79 751.09 354.59 785.62 354.59 C821 354.59 820.55 346.08 855.92 343.15 C891.24 340.22 891.54 340.22 926.99 340.22 C962.61 340.22 962.66 343.07 998.05 347.94 C1033.34 352.79 1033.32 359.65 1068.35 359.65 C1103.61 359.65 1103.45 345.28 1138.64 345.28 C1174.13 345.28 1173.86 358.85 1209.71 358.85 C1244.93 358.85 1245.46 358.85 1280.78 357.78 C1315.75 356.73 1350.3 346.87 1350.3 346.87 L1350.3 423.6 L1280.78 423.6 L1209.71 423.6 L1138.64 423.6 L1068.35 423.6 L998.05 423.6 L926.99 423.6 L855.92 423.6 L785.62 423.6 L716.1 423.6 Z" fill="#454e7c" fill-opacity="0.6"/>
<path d="M716.1 337.83 C716.1 337.83 751.54 338.62 785.62 338.62 C821.45 338.62 820.09 318.67 855.92 318.67 C890.77 318.67 891.55 318.67 926.99 320.26 C962.62 321.87 962.42 327.98 998.05 327.98 C1033.1 327.98 1033.23 327.98 1068.35 327.98 C1103.53 327.98 1103.88 323.72 1138.64 323.72 C1174.56 323.72 1173.8 339.42 1209.71 339.42 C1244.87 339.42 1245.52 338.97 1280.78 334.37 C1315.81 329.79 1350.3 321.06 1350.3 321.06 L1350.3 346.87 C1350.3 346.87 1315.75 356.73 1280.78 357.78 C1245.46 358.85 1244.93 358.85 1209.71 358.85 C1173.86 358.85 1174.13 345.28 1138.64 345.28 C1103.45 345.28 1103.61 359.65 1068.35 359.65 C1033.32 359.65 1033.34 352.79 998.05 347.94 C962.66 343.07 962.61 340.22 926.99 340.22 C891.54 340.22 891.24 340.22 855.92 343.15 C820.55 346.08 821 354.59 785.62 354.59 C751.09 354.59 716.1 353.79 716.1 353.79 Z" fill="#ff7f44" fill-opacity="0.6"/>
<path d="M716.1 321.33 C716.1 321.33 750.89 319.05 785.62 316.01 C820.8 312.93 820.69 310.94 855.92 309.09 C891.37 307.22 891.48 307.22 926.99 307.22 C962.55 307.22 962.6 311.75 998.05 311.75 C1033.29 311.75 1033.09 303.5 1068.35 303.5 C1103.38 303.5 1103.81 303.5 1138.64 305.36 C1174.49 307.28 1173.92 318.93 1209.71 318.93 C1244.99 318.93 1245.44 317.56 1280.78 313.08 C1315.74 308.65 1350.3 301.1 1350.3 301.1 L1350.3 321.06 C1350.3 321.06 1315.81 329.79 1280.78 334.37 C1245.52 338.97 1244.87 339.42 1209.71 339.42 C1173.8 339.42 1174.56 323.72 1138.64 323.72 C1103.88 323.72 1103.53 327.98 1068.35 327.98 C1033.23 327.98 1033.1 327.98 998.05 327.98 C962.42 327.98 962.62 321.87 926.99 320.26 C891.55 318.67 890.77 318.67 855.92 318.67 C820.09 318.67 821.45 338.62 785.62 338.62 C751.54 338.62 716.1 337.83 716.1 337.83 Z" fill="#e04355" fill-opacity="0.6"/>
<path d="M716.1 310.15 C716.1 310.15 750.55 298.19 785.62 296.85 C820.46 295.52 820.77 295.52 855.92 295.52 C891.45 295.52 891.46 295.78 926.99 295.78 C962.53 295.78 962.52 294.66 998.05 293.39 C1033.2 292.13 1033.19 290.73 1068.35 290.73 C1103.49 290.73 1103.83 290.73 1138.64 292.59 C1174.51 294.51 1174.02 306.69 1209.71 306.69 C1245.09 306.69 1245.09 300.03 1280.78 296.31 C1315.39 292.71 1350.3 292.06 1350.3 292.06 L1350.3 301.1 C1350.3 301.1 1315.74 308.65 1280.78 313.08 C1245.44 317.56 1244.99 318.93 1209.71 318.93 C1173.92 318.93 1174.49 307.28 1138.64 305.36 C1103.81 303.5 1103.38 303.5 1068.35 303.5 C1033.09 303.5 1033.29 311.75 998.05 311.75 C962.6 311.75 962.55 307.22 926.99 307.22 C891.48 307.22 891.37 307.22 855.92 309.09 C820.69 310.94 820.8 312.93 785.62 316.01 C750.89 319.05 716.1 321.33 716.1 321.33 Z" fill="#fdca2c" fill-opacity="0.6"/>
<path d="M716.1 305.89 C716.1 305.89 750.52 292.59 785.62 292.06 C820.43 291.52 820.77 291.52 855.92 291.52 C891.45 291.52 891.48 292.06 926.99 292.06 C962.54 292.06 962.49 288.6 998.05 288.33 C1033.18 288.07 1033.2 288.07 1068.35 288.07 C1103.5 288.07 1103.79 288.07 1138.64 288.6 C1174.47 289.14 1174.05 301.64 1209.71 301.64 C1245.12 301.64 1245.08 293.99 1280.78 291.79 C1315.38 289.66 1350.3 289.66 1350.3 289.66 L1350.3 292.06 C1350.3 292.06 1315.39 292.71 1280.78 296.31 C1245.09 300.03 1245.09 306.69 1209.71 306.69 C1174.02 306.69 1174.51 294.51 1138.64 292.59 C1103.83 290.73 1103.49 290.73 1068.35 290.73 C1033.19 290.73 1033.2 292.13 998.05 293.39 C962.52 294.66 962.53 295.78 926.99 295.78 C891.46 295.78 891.45 295.52 855.92 295.52 C820.77 295.52 820.46 295.52 785.62 296.85 C750.55 298.19 716.1 310.15 716.1 310.15 Z" fill="#a868b7" fill-opacity="0.6"/>
<path d="M716.1 286.47 C716.1 286.47 750.29 269.19 785.62 268.37 C820.2 267.58 820.78 267.58 855.92 267.58 C891.47 267.58 891.44 269.37 926.99 270.5 C962.51 271.63 962.54 272.1 998.05 272.1 C1033.22 272.1 1033.18 268.64 1068.35 268.64 C1103.47 268.64 1103.61 268.64 1138.64 269.17 C1174.29 269.71 1174.07 277.16 1209.71 277.16 C1245.13 277.16 1245.43 277.16 1280.78 276.62 C1315.72 276.1 1350.3 266.51 1350.3 266.51 L1350.3 289.66 C1350.3 289.66 1315.38 289.66 1280.78 291.79 C1245.08 293.99 1245.12 301.64 1209.71 301.64 C1174.05 301.64 1174.47 289.14 1138.64 288.6 C1103.79 288.07 1103.5 288.07 1068.35 288.07 C1033.2 288.07 1033.18 288.07 998.05 288.33 C962.49 288.6 962.54 292.06 926.99 292.06 C891.48 292.06 891.45 291.52 855.92 291.52 C820.77 291.52 820.43 291.52 785.62 292.06 C750.52 292.59 716.1 305.89 716.1 305.89 Z" fill="#666666" fill-opacity="0.6"/>
<path d="M716.1 237 C716.1 237 750.86 237 785.62 237 C820.77 237 820.77 237 855.92 237 C891.45 237 891.45 237 926.99 237 C962.52 237 962.52 237 998.05 237 C1033.2 237 1033.2 237 1068.35 237 C1103.5 237 1103.5 237 1138.64 237 C1174.18 237 1174.18 237 1209.71 237 C1245.24 237 1245.24 237 1280.78 237 C1315.54 237 1350.3 237 1350.3 237 L1350.3 266.51 C1350.3 266.51 1315.72 276.1 1280.78 276.62 C1245.43 277.16 1245.13 277.16 1209.71 277.16 C1174.07 277.16 1174.29 269.71 1138.64 269.17 C1103.61 268.64 1103.47 268.64 1068.35 268.64 C1033.18 268.64 1033.22 272.1 998.05 272.1 C962.54 272.1 962.51 271.63 926.99 270.5 C891.44 269.37 891.47 267.58 855.92 267.58 C820.78 267.58 820.2 267.58 785.62 268.37 C750.29 269.19 716.1 286.47 716.1 286.47 Z" fill="#5ac189" fill-opacity="0.6"/>
<path d="M716.1 353.79 C716.1 353.79 751.09 354.59 785.62 354.59 C821 354.59 820.55 346.08 855.92 343.15 C891.24 340.22 891.54 340.22 926.99 340.22 C962.61 340.22 962.66 343.07 998.05 347.94 C1033.34 352.79 1033.32 359.65 1068.35 359.65 C1103.61 359.65 1103.45 345.28 1138.64 345.28 C1174.13 345.28 1173.86 358.85 1209.71 358.85 C1244.93 358.85 1245.46 358.85 1280.78 357.78 C1315.75 356.73 1350.3 346.87 1350.3 346.87" fill="none" stroke="#454e7c" stroke-width="2.15" stroke-linejoin="bevel"/>
<path d="M716.1 337.83 C716.1 337.83 751.54 338.62 785.62 338.62 C821.45 338.62 820.09 318.67 855.92 318.67 C890.77 318.67 891.55 318.67 926.99 320.26 C962.62 321.87 962.42 327.98 998.05 327.98 C1033.1 327.98 1033.23 327.98 1068.35 327.98 C1103.53 327.98 1103.88 323.72 1138.64 323.72 C1174.56 323.72 1173.8 339.42 1209.71 339.42 C1244.87 339.42 1245.52 338.97 1280.78 334.37 C1315.81 329.79 1350.3 321.06 1350.3 321.06" fill="none" stroke="#ff7f44" stroke-width="2.15" stroke-linejoin="bevel"/>
<path d="M716.1 321.33 C716.1 321.33 750.89 319.05 785.62 316.01 C820.8 312.93 820.69 310.94 855.92 309.09 C891.37 307.22 891.48 307.22 926.99 307.22 C962.55 307.22 962.6 311.75 998.05 311.75 C1033.29 311.75 1033.09 303.5 1068.35 303.5 C1103.38 303.5 1103.81 303.5 1138.64 305.36 C1174.49 307.28 1173.92 318.93 1209.71 318.93 C1244.99 318.93 1245.44 317.56 1280.78 313.08 C1315.74 308.65 1350.3 301.1 1350.3 301.1" fill="none" stroke="#e04355" stroke-width="2.15" stroke-linejoin="bevel"/>
<path d="M716.1 310.15 C716.1 310.15 750.55 298.19 785.62 296.85 C820.46 295.52 820.77 295.52 855.92 295.52 C891.45 295.52 891.46 295.78 926.99 295.78 C962.53 295.78 962.52 294.66 998.05 293.39 C1033.2 292.13 1033.19 290.73 1068.35 290.73 C1103.49 290.73 1103.83 290.73 1138.64 292.59 C1174.51 294.51 1174.02 306.69 1209.71 306.69 C1245.09 306.69 1245.09 300.03 1280.78 296.31 C1315.39 292.71 1350.3 292.06 1350.3 292.06" fill="none" stroke="#fcc700" stroke-width="2.15" stroke-linejoin="bevel"/>
<path d="M716.1 305.89 C716.1 305.89 750.52 292.59 785.62 292.06 C820.43 291.52 820.77 291.52 855.92 291.52 C891.45 291.52 891.48 292.06 926.99 292.06 C962.54 292.06 962.49 288.6 998.05 288.33 C1033.18 288.07 1033.2 288.07 1068.35 288.07 C1103.5 288.07 1103.79 288.07 1138.64 288.6 C1174.47 289.14 1174.05 301.64 1209.71 301.64 C1245.12 301.64 1245.08 293.99 1280.78 291.79 C1315.38 289.66 1350.3 289.66 1350.3 289.66" fill="none" stroke="#a868b7" stroke-width="2.15" stroke-linejoin="bevel"/>
<path d="M716.1 286.47 C716.1 286.47 750.29 269.19 785.62 268.37 C820.2 267.58 820.78 267.58 855.92 267.58 C891.47 267.58 891.44 269.37 926.99 270.5 C962.51 271.63 962.54 272.1 998.05 272.1 C1033.22 272.1 1033.18 268.64 1068.35 268.64 C1103.47 268.64 1103.61 268.64 1138.64 269.17 C1174.29 269.71 1174.07 277.16 1209.71 277.16 C1245.13 277.16 1245.43 277.16 1280.78 276.62 C1315.72 276.1 1350.3 266.51 1350.3 266.51" fill="none" stroke="#666666" stroke-width="2.15" stroke-linejoin="bevel"/>
<path d="M716.1 237 C716.1 237 750.86 237 785.62 237 C820.77 237 820.77 237 855.92 237 C891.45 237 891.45 237 926.99 237 C962.52 237 962.52 237 998.05 237 C1033.2 237 1033.2 237 1068.35 237 C1103.5 237 1103.5 237 1138.64 237 C1174.18 237 1174.18 237 1209.71 237 C1245.24 237 1245.24 237 1280.78 237 C1315.54 237 1350.3 237 1350.3 237" fill="none" stroke="#5ac189" stroke-width="2.15" stroke-linejoin="bevel"/>
<circle cx="716.1" cy="353.79" r="2.7" fill="#fff" stroke="#454e7c" stroke-width="1.85"/>
<circle cx="785.62" cy="354.59" r="2.7" fill="#fff" stroke="#454e7c" stroke-width="1.85"/>
<circle cx="855.92" cy="343.15" r="2.7" fill="#fff" stroke="#454e7c" stroke-width="1.85"/>
<circle cx="926.99" cy="340.22" r="2.7" fill="#fff" stroke="#454e7c" stroke-width="1.85"/>
<circle cx="998.05" cy="347.94" r="2.7" fill="#fff" stroke="#454e7c" stroke-width="1.85"/>
<circle cx="1068.35" cy="359.65" r="2.7" fill="#fff" stroke="#454e7c" stroke-width="1.85"/>
<circle cx="1138.64" cy="345.28" r="2.7" fill="#fff" stroke="#454e7c" stroke-width="1.85"/>
<circle cx="1209.71" cy="358.85" r="2.7" fill="#fff" stroke="#454e7c" stroke-width="1.85"/>
<circle cx="1280.78" cy="357.78" r="2.7" fill="#fff" stroke="#454e7c" stroke-width="1.85"/>
<circle cx="1350.3" cy="346.87" r="2.7" fill="#fff" stroke="#454e7c" stroke-width="1.85"/>
<circle cx="716.1" cy="337.83" r="2.7" fill="#fff" stroke="#ff7f44" stroke-width="1.85"/>
<circle cx="785.62" cy="338.62" r="2.7" fill="#fff" stroke="#ff7f44" stroke-width="1.85"/>
<circle cx="855.92" cy="318.67" r="2.7" fill="#fff" stroke="#ff7f44" stroke-width="1.85"/>
<circle cx="926.99" cy="320.26" r="2.7" fill="#fff" stroke="#ff7f44" stroke-width="1.85"/>
<circle cx="998.05" cy="327.98" r="2.7" fill="#fff" stroke="#ff7f44" stroke-width="1.85"/>
<circle cx="1068.35" cy="327.98" r="2.7" fill="#fff" stroke="#ff7f44" stroke-width="1.85"/>
<circle cx="1138.64" cy="323.72" r="2.7" fill="#fff" stroke="#ff7f44" stroke-width="1.85"/>
<circle cx="1209.71" cy="339.42" r="2.7" fill="#fff" stroke="#ff7f44" stroke-width="1.85"/>
<circle cx="1280.78" cy="334.37" r="2.7" fill="#fff" stroke="#ff7f44" stroke-width="1.85"/>
<circle cx="1350.3" cy="321.06" r="2.7" fill="#fff" stroke="#ff7f44" stroke-width="1.85"/>
<circle cx="716.1" cy="321.33" r="2.7" fill="#fff" stroke="#e04355" stroke-width="1.85"/>
<circle cx="785.62" cy="316.01" r="2.7" fill="#fff" stroke="#e04355" stroke-width="1.85"/>
<circle cx="855.92" cy="309.09" r="2.7" fill="#fff" stroke="#e04355" stroke-width="1.85"/>
<circle cx="926.99" cy="307.22" r="2.7" fill="#fff" stroke="#e04355" stroke-width="1.85"/>
<circle cx="998.05" cy="311.75" r="2.7" fill="#fff" stroke="#e04355" stroke-width="1.85"/>
<circle cx="1068.35" cy="303.5" r="2.7" fill="#fff" stroke="#e04355" stroke-width="1.85"/>
<circle cx="1138.64" cy="305.36" r="2.7" fill="#fff" stroke="#e04355" stroke-width="1.85"/>
<circle cx="1209.71" cy="318.93" r="2.7" fill="#fff" stroke="#e04355" stroke-width="1.85"/>
<circle cx="1280.78" cy="313.08" r="2.7" fill="#fff" stroke="#e04355" stroke-width="1.85"/>
<circle cx="1350.3" cy="301.1" r="2.7" fill="#fff" stroke="#e04355" stroke-width="1.85"/>
<circle cx="716.1" cy="310.15" r="2.7" fill="#fff" stroke="#fcc700" stroke-width="1.85"/>
<circle cx="785.62" cy="296.85" r="2.7" fill="#fff" stroke="#fcc700" stroke-width="1.85"/>
<circle cx="855.92" cy="295.52" r="2.7" fill="#fff" stroke="#fcc700" stroke-width="1.85"/>
<circle cx="926.99" cy="295.78" r="2.7" fill="#fff" stroke="#fcc700" stroke-width="1.85"/>
<circle cx="998.05" cy="293.39" r="2.7" fill="#fff" stroke="#fcc700" stroke-width="1.85"/>
<circle cx="1068.35" cy="290.73" r="2.7" fill="#fff" stroke="#fcc700" stroke-width="1.85"/>
<circle cx="1138.64" cy="292.59" r="2.7" fill="#fff" stroke="#fcc700" stroke-width="1.85"/>
<circle cx="1209.71" cy="306.69" r="2.7" fill="#fff" stroke="#fcc700" stroke-width="1.85"/>
<circle cx="1280.78" cy="296.31" r="2.7" fill="#fff" stroke="#fcc700" stroke-width="1.85"/>
<circle cx="1350.3" cy="292.06" r="2.7" fill="#fff" stroke="#fcc700" stroke-width="1.85"/>
<circle cx="716.1" cy="305.89" r="2.7" fill="#fff" stroke="#a868b7" stroke-width="1.85"/>
<circle cx="785.62" cy="292.06" r="2.7" fill="#fff" stroke="#a868b7" stroke-width="1.85"/>
<circle cx="855.92" cy="291.52" r="2.7" fill="#fff" stroke="#a868b7" stroke-width="1.85"/>
<circle cx="926.99" cy="292.06" r="2.7" fill="#fff" stroke="#a868b7" stroke-width="1.85"/>
<circle cx="998.05" cy="288.33" r="2.7" fill="#fff" stroke="#a868b7" stroke-width="1.85"/>
<circle cx="1068.35" cy="288.07" r="2.7" fill="#fff" stroke="#a868b7" stroke-width="1.85"/>
<circle cx="1138.64" cy="288.6" r="2.7" fill="#fff" stroke="#a868b7" stroke-width="1.85"/>
<circle cx="1209.71" cy="301.64" r="2.7" fill="#fff" stroke="#a868b7" stroke-width="1.85"/>
<circle cx="1280.78" cy="291.79" r="2.7" fill="#fff" stroke="#a868b7" stroke-width="1.85"/>
<circle cx="1350.3" cy="289.66" r="2.7" fill="#fff" stroke="#a868b7" stroke-width="1.85"/>
<circle cx="716.1" cy="286.47" r="2.7" fill="#fff" stroke="#666666" stroke-width="1.85"/>
<circle cx="785.62" cy="268.37" r="2.7" fill="#fff" stroke="#666666" stroke-width="1.85"/>
<circle cx="855.92" cy="267.58" r="2.7" fill="#fff" stroke="#666666" stroke-width="1.85"/>
<circle cx="926.99" cy="270.5" r="2.7" fill="#fff" stroke="#666666" stroke-width="1.85"/>
<circle cx="998.05" cy="272.1" r="2.7" fill="#fff" stroke="#666666" stroke-width="1.85"/>
<circle cx="1068.35" cy="268.64" r="2.7" fill="#fff" stroke="#666666" stroke-width="1.85"/>
<circle cx="1138.64" cy="269.17" r="2.7" fill="#fff" stroke="#666666" stroke-width="1.85"/>
<circle cx="1209.71" cy="277.16" r="2.7" fill="#fff" stroke="#666666" stroke-width="1.85"/>
<circle cx="1280.78" cy="276.62" r="2.7" fill="#fff" stroke="#666666" stroke-width="1.85"/>
<circle cx="1350.3" cy="266.51" r="2.7" fill="#fff" stroke="#666666" stroke-width="1.85"/>
<circle cx="716.1" cy="237" r="2.7" fill="#fff" stroke="#5ac189" stroke-width="1.85"/>
<circle cx="785.62" cy="237" r="2.7" fill="#fff" stroke="#5ac189" stroke-width="1.85"/>
<circle cx="855.92" cy="237" r="2.7" fill="#fff" stroke="#5ac189" stroke-width="1.85"/>
<circle cx="926.99" cy="237" r="2.7" fill="#fff" stroke="#5ac189" stroke-width="1.85"/>
<circle cx="998.05" cy="237" r="2.7" fill="#fff" stroke="#5ac189" stroke-width="1.85"/>
<circle cx="1068.35" cy="237" r="2.7" fill="#fff" stroke="#5ac189" stroke-width="1.85"/>
<circle cx="1138.64" cy="237" r="2.7" fill="#fff" stroke="#5ac189" stroke-width="1.85"/>
<circle cx="1209.71" cy="237" r="2.7" fill="#fff" stroke="#5ac189" stroke-width="1.85"/>
<circle cx="1280.78" cy="237" r="2.7" fill="#fff" stroke="#5ac189" stroke-width="1.85"/>
<circle cx="1350.3" cy="237" r="2.7" fill="#fff" stroke="#5ac189" stroke-width="1.85"/>
<path d="M656.1 210.4 H680.7" stroke="#454e7c" stroke-width="1.7" fill="none"/>
<circle cx="668.4" cy="210.4" r="4.9" fill="#fff" stroke="#454e7c" stroke-width="1.7"/>
<path d="M761.7 210.4 H786.3" stroke="#ff7f44" stroke-width="1.7" fill="none"/>
<circle cx="774" cy="210.4" r="4.9" fill="#fff" stroke="#ff7f44" stroke-width="1.7"/>
<path d="M864.1 210.4 H888.7" stroke="#e04355" stroke-width="1.7" fill="none"/>
<circle cx="876.4" cy="210.4" r="4.9" fill="#fff" stroke="#e04355" stroke-width="1.7"/>
<path d="M940 210.4 H964.6" stroke="#fcc700" stroke-width="1.7" fill="none"/>
<circle cx="952.3" cy="210.4" r="4.9" fill="#fff" stroke="#fcc700" stroke-width="1.7"/>
<path d="M1009.3 210.4 H1033.9" stroke="#a868b7" stroke-width="1.7" fill="none"/>
<circle cx="1021.6" cy="210.4" r="4.9" fill="#fff" stroke="#a868b7" stroke-width="1.7"/>
<path d="M1081.3 210.4 H1105.9" stroke="#666666" stroke-width="1.7" fill="none"/>
<circle cx="1093.6" cy="210.4" r="4.9" fill="#fff" stroke="#666666" stroke-width="1.7"/>
<path d="M1215 210.4 H1239.6" stroke="#5ac189" stroke-width="1.7" fill="none"/>
<circle cx="1227.3" cy="210.4" r="4.9" fill="#fff" stroke="#5ac189" stroke-width="1.7"/>
<g fill="none" stroke="#858585" stroke-width="1"><path d="M1319 208.5 H1333.5 V219.5 H1322.5 V205"/><path d="M1349.6 205.4 L1346.5 208.5 L1349.6 211.6 M1346.5 208.5 H1357.5 V219.5 H1346.5 V213.6"/></g>
<rect x="719.1" y="462.6" width="633.8" height="7.6" fill="#d5dbec" fill-opacity="0.8"/>
<rect x="719.1" y="470.0" width="633.8" height="27.5" fill="#e6eefd"/>
<path d="M719.1 487.2 L788.58 487.4 L858.83 476.1 L929.85 474.1 L1000.87 481 L1071.13 492.6 L1141.38 479.1 L1212.4 491.4 L1283.42 491 L1352.9 481 L1352.9 497.5 L719.1 497.5 Z" fill="#d3e0fc"/>
<path d="M719.1 487.2 L788.58 487.4 L858.83 476.1 L929.85 474.1 L1000.87 481 L1071.13 492.6 L1141.38 479.1 L1212.4 491.4 L1283.42 491 L1352.9 481" fill="none" stroke="#a9c1f7" stroke-width="0.8"/>
<path d="M719.4 468 V497.5 M1352.6000000000001 468 V497.5" stroke="#b9c2d8" stroke-width="1" fill="none"/>
<rect x="716.2" y="474.3" width="5.8" height="17.8" rx="1.2" fill="#fff" stroke="#acb8d1" stroke-width="1"/>
<rect x="1350" y="474.3" width="5.8" height="17.8" rx="1.2" fill="#fff" stroke="#acb8d1" stroke-width="1"/>
<g fill="#fff"><circle cx="1033.8" cy="466.1" r="0.7"/><circle cx="1036" cy="466.1" r="0.7"/><circle cx="1038.2" cy="466.1" r="0.7"/></g></svg>
<span class="t s" style="left:690.33px;top:417.00px;font-size:12px;line-height:14px;color:#6e7079;letter-spacing:-0.200px;">0%</span>
<span class="t s" style="left:683.85px;top:380.00px;font-size:12px;line-height:14px;color:#6e7079;letter-spacing:-0.200px;">20%</span>
<span class="t s" style="left:683.85px;top:343.00px;font-size:12px;line-height:14px;color:#6e7079;letter-spacing:-0.200px;">40%</span>
<span class="t s" style="left:683.85px;top:305.00px;font-size:12px;line-height:14px;color:#6e7079;letter-spacing:-0.200px;">60%</span>
<span class="t s" style="left:683.85px;top:268.00px;font-size:12px;line-height:14px;color:#6e7079;letter-spacing:-0.200px;">80%</span>
<span class="t s" style="left:677.38px;top:231.00px;font-size:12px;line-height:14px;color:#6e7079;letter-spacing:-0.200px;">100%</span>
<span class="t" style="left:702.89px;top:430.00px;font-size:12px;line-height:14px;color:#6e7079;font-weight:700;letter-spacing:-0.200px;">2003</span>
<span class="t s" style="left:776.48px;top:430.00px;font-size:12px;line-height:14px;color:#6e7079;letter-spacing:-0.200px;">Apr</span>
<span class="t s" style="left:848.78px;top:430.00px;font-size:12px;line-height:14px;color:#6e7079;letter-spacing:-0.200px;">Jul</span>
<span class="t s" style="left:917.52px;top:430.00px;font-size:12px;line-height:14px;color:#6e7079;letter-spacing:-0.200px;">Oct</span>
<span class="t" style="left:984.84px;top:430.00px;font-size:12px;line-height:14px;color:#6e7079;font-weight:700;letter-spacing:-0.200px;">2004</span>
<span class="t s" style="left:1059.21px;top:430.00px;font-size:12px;line-height:14px;color:#6e7079;letter-spacing:-0.200px;">Apr</span>
<span class="t s" style="left:1131.51px;top:430.00px;font-size:12px;line-height:14px;color:#6e7079;letter-spacing:-0.200px;">Jul</span>
<span class="t s" style="left:1200.24px;top:430.00px;font-size:12px;line-height:14px;color:#6e7079;letter-spacing:-0.200px;">Oct</span>
<span class="t" style="left:1267.57px;top:430.00px;font-size:12px;line-height:14px;color:#6e7079;font-weight:700;letter-spacing:-0.200px;">2005</span>
<span class="t s" style="left:1341.16px;top:430.00px;font-size:12px;line-height:14px;color:#6e7079;letter-spacing:-0.200px;">Apr</span>
<span class="t s" style="left:685.50px;top:204.00px;font-size:12px;line-height:14px;color:#333;letter-spacing:-0.158px;">Classic Cars</span>
<span class="t s" style="left:791.30px;top:204.00px;font-size:12px;line-height:14px;color:#333;letter-spacing:-0.181px;">Motorcycles</span>
<span class="t s" style="left:893.70px;top:204.00px;font-size:12px;line-height:14px;color:#333;letter-spacing:-0.258px;">Planes</span>
<span class="t s" style="left:969.60px;top:204.00px;font-size:12px;line-height:14px;color:#333;letter-spacing:-0.354px;">Ships</span>
<span class="t s" style="left:1038.90px;top:204.00px;font-size:12px;line-height:14px;color:#333;letter-spacing:-0.319px;">Trains</span>
<span class="t s" style="left:1111.40px;top:204.00px;font-size:12px;line-height:14px;color:#333;letter-spacing:-0.206px;">Trucks and Buses</span>
<span class="t s" style="left:1244.30px;top:204.00px;font-size:12px;line-height:14px;color:#333;letter-spacing:-0.214px;">Vintage Cars</span>
<svg class="b" style="left:989px;top:538px;" width="37" height="10" viewBox="0 0 37 10"><path d="M0.3 3 H35.8 M0.3 6.8 H35.8" stroke="#d6d6d6" stroke-width="1" fill="none"/></svg>
<div class="b" style="left:629.5px;top:591px;width:754.5px;height:1px;background:#f0f0f0;"></div>
<div class="b" style="left:629.5px;top:590px;width:51.5px;height:2px;background:#454e7c;"></div>
<span class="t s" style="left:629.90px;top:565.00px;font-size:11.53px;line-height:12px;color:#2f2f2f;letter-spacing:-0.296px;">RESULTS</span>
<span class="t s" style="left:712.90px;top:565.00px;font-size:11.54px;line-height:12px;color:#4a4a4a;letter-spacing:-0.297px;">SAMPLES</span>
<svg class="b" style="left:1366.7px;top:561.8px;" width="12.4" height="7.8" viewBox="0 0 12.4 7.8"><path d="M1.62 6.40 L6.20 1.89 L10.78 6.40" fill="none" stroke="#3a3a3a" stroke-width="1.67" stroke-linecap="round" stroke-linejoin="round"/></svg>
<div class="b" style="left:629.5px;top:608px;width:193px;height:30.5px;background:#fff;border-radius:4px;border:1px solid #d6d6de;"></div>
<svg class="b" style="left:644.8px;top:616.4px;" width="18" height="18" viewBox="0 0 18 18"><g fill="none" stroke="#444" stroke-width="1.6" stroke-linecap="round"><circle cx="7.2" cy="7.2" r="5.8"/><path d="M11.6 11.6 L16.2 16.2"/></g></svg>
<span class="t s" style="left:669.40px;top:616.00px;font-size:14px;line-height:16px;color:#c2c2c2;letter-spacing:-0.034px;">Search</span>
<div class="b" style="left:1297.6px;top:613.5px;width:63.4px;height:21.5px;background:#f0f0f0;border-radius:11px;"></div>
<span class="t s" style="left:1308.60px;top:617.00px;font-size:12px;line-height:14px;color:#323232;letter-spacing:-0.020px;">10 rows</span>
<svg class="b" style="left:1369.6px;top:616px;" width="14.4" height="17" viewBox="0 0 14.4 17"><g fill="none" stroke="#555" stroke-width="1.2" stroke-linejoin="round"><path d="M4.4 3.2 V0.8 H13.6 V13.4 H11.2"/><path d="M1 3.4 H10.8 V16 H4 L1 13 Z"/></g></svg>
<div class="b clip" style="left:629.5px;top:650px;width:754.7px;height:177px;"><span class="t" style="left:34.40px;top:11.00px;font-size:12px;line-height:14px;color:#323232;font-weight:700;letter-spacing:-0.344px;">__timestamp</span>
<svg class="b" style="left:113.6px;top:14.200000000000045px;" width="5" height="9" viewBox="0 0 5 9"><path d="M0.4 3.4 L2.3 0.6 L4.2 3.4 Z M0.4 5.2 L2.3 8 L4.2 5.2 Z" fill="#d0d0d0"/></svg>
<span class="t" style="left:152.80px;top:11.00px;font-size:12px;line-height:14px;color:#323232;font-weight:700;letter-spacing:-0.243px;">Classic Cars</span>
<svg class="b" style="left:232.1px;top:14.200000000000045px;" width="5" height="9" viewBox="0 0 5 9"><path d="M0.4 3.4 L2.3 0.6 L4.2 3.4 Z M0.4 5.2 L2.3 8 L4.2 5.2 Z" fill="#d0d0d0"/></svg>
<span class="t" style="left:293.10px;top:11.00px;font-size:12px;line-height:14px;color:#323232;font-weight:700;letter-spacing:-0.015px;">Motorcycles</span>
<svg class="b" style="left:372.9px;top:14.200000000000045px;" width="5" height="9" viewBox="0 0 5 9"><path d="M0.4 3.4 L2.3 0.6 L4.2 3.4 Z M0.4 5.2 L2.3 8 L4.2 5.2 Z" fill="#d0d0d0"/></svg>
<span class="t" style="left:433.90px;top:11.00px;font-size:12px;line-height:14px;color:#323232;font-weight:700;letter-spacing:-0.443px;">Planes</span>
<svg class="b" style="left:480.3px;top:14.200000000000045px;" width="5" height="9" viewBox="0 0 5 9"><path d="M0.4 3.4 L2.3 0.6 L4.2 3.4 Z M0.4 5.2 L2.3 8 L4.2 5.2 Z" fill="#d0d0d0"/></svg>
<span class="t" style="left:575.50px;top:11.00px;font-size:12px;line-height:14px;color:#323232;font-weight:700;letter-spacing:-0.600px;">Ships</span>
<svg class="b" style="left:615.7px;top:14.200000000000045px;" width="5" height="9" viewBox="0 0 5 9"><path d="M0.4 3.4 L2.3 0.6 L4.2 3.4 Z M0.4 5.2 L2.3 8 L4.2 5.2 Z" fill="#d0d0d0"/></svg>
<span class="t" style="left:715.10px;top:11.00px;font-size:12px;line-height:14px;color:#323232;font-weight:700;letter-spacing:-0.335px;">Trains</span>
<svg class="b" style="left:15.700000000000045px;top:11.200000000000045px;" width="14" height="14" viewBox="0 0 14 14"><g fill="none" stroke="#b5b5b5" stroke-width="1"><circle cx="7" cy="7" r="2.3"/><path d="M7 0.9 L8.5 1.3 L9 2.7 L10.5 2.3 L11.8 3.4 L11.4 4.9 L12.7 5.7 L13 7.2 L11.9 8.3 L12.4 9.8 L11.3 11 L9.8 10.7 L9.1 12.1 L7.6 12.6 L6.4 11.6 L5 12.2 L3.6 11.4 L3.6 9.9 L2.2 9.4 L1.6 8 L2.5 6.8 L1.8 5.4 L2.6 4.1 L4.1 4.1 L4.7 2.7 L6.2 2.2 Z"/></g></svg>
<div class="b" style="left:0px;top:30px;width:754.7px;height:2px;background:#dedede;"></div>
<span class="t s" style="left:16.10px;top:38.00px;font-size:12px;line-height:14px;color:#323232;letter-spacing:0.369px;">2003-01-01 00:00:00</span>
<span class="t s" style="left:152.80px;top:38.00px;font-size:12px;line-height:14px;color:#323232;letter-spacing:0.358px;">166682.87000000002</span>
<span class="t s" style="left:293.10px;top:38.00px;font-size:12px;line-height:14px;color:#323232;letter-spacing:0.146px;">38422.91</span>
<span class="t s" style="left:433.90px;top:38.00px;font-size:12px;line-height:14px;color:#323232;letter-spacing:0.393px;">39205.310000000005</span>
<span class="t s" style="left:575.50px;top:38.00px;font-size:12px;line-height:14px;color:#323232;letter-spacing:0.346px;">27050.379999999997</span>
<span class="t s" style="left:715.10px;top:38.00px;font-size:12px;line-height:14px;color:#323232;letter-spacing:0.050px;">9263.65</span>
<span class="t s" style="left:16.10px;top:65.00px;font-size:12px;line-height:14px;color:#323232;letter-spacing:0.491px;">2003-04-01 00:00:00</span>
<span class="t s" style="left:152.80px;top:65.00px;font-size:12px;line-height:14px;color:#323232;letter-spacing:0.256px;">208309.87</span>
<span class="t s" style="left:293.10px;top:65.00px;font-size:12px;line-height:14px;color:#323232;letter-spacing:0.346px;">48214.920000000006</span>
<span class="t s" style="left:433.90px;top:65.00px;font-size:12px;line-height:14px;color:#323232;letter-spacing:0.289px;">68678.99</span>
<span class="t s" style="left:575.50px;top:65.00px;font-size:12px;line-height:14px;color:#323232;letter-spacing:0.385px;">56444.27000000001</span>
<span class="t s" style="left:715.10px;top:65.00px;font-size:12px;line-height:14px;color:#323232;letter-spacing:0.050px;">14827.52</span>
<span class="t s" style="left:16.10px;top:93.00px;font-size:12px;line-height:14px;color:#323232;letter-spacing:0.447px;">2003-07-01 00:00:00</span>
<span class="t s" style="left:152.80px;top:93.00px;font-size:12px;line-height:14px;color:#323232;letter-spacing:0.106px;">280129.06</span>
<span class="t s" style="left:293.10px;top:93.00px;font-size:12px;line-height:14px;color:#323232;letter-spacing:0.210px;">85244.71999999997</span>
<span class="t s" style="left:433.90px;top:93.00px;font-size:12px;line-height:14px;color:#323232;letter-spacing:0.460px;">33938.33</span>
<span class="t s" style="left:575.50px;top:93.00px;font-size:11.85px;line-height:14px;color:#323232;letter-spacing:-0.116px;">46171.27</span>
<span class="t s" style="left:715.10px;top:93.00px;font-size:12px;line-height:14px;color:#323232;letter-spacing:0.050px;">13409.45</span>
<span class="t s" style="left:16.10px;top:121.00px;font-size:12px;line-height:14px;color:#323232;letter-spacing:0.369px;">2003-10-01 00:00:00</span>
<span class="t s" style="left:152.80px;top:121.00px;font-size:12px;line-height:14px;color:#323232;letter-spacing:0.456px;">829663.49</span>
<span class="t s" style="left:293.10px;top:121.00px;font-size:12px;line-height:14px;color:#323232;letter-spacing:-0.006px;">199013.03</span>
<span class="t s" style="left:433.90px;top:121.00px;font-size:12px;line-height:14px;color:#323232;letter-spacing:0.464px;">130434.96999999999</span>
<span class="t s" style="left:575.50px;top:121.00px;font-size:12px;line-height:14px;color:#323232;letter-spacing:0.034px;">115155.16999999998</span>
<span class="t s" style="left:715.10px;top:121.00px;font-size:12px;line-height:14px;color:#323232;letter-spacing:0.050px;">35301.62</span>
<span class="t s" style="left:16.10px;top:149.00px;font-size:12px;line-height:14px;color:#323232;letter-spacing:0.369px;">2004-01-01 00:00:00</span>
<span class="t s" style="left:152.80px;top:149.00px;font-size:12px;line-height:14px;color:#323232;letter-spacing:0.491px;">336970.3699999999</span>
<span class="t s" style="left:293.10px;top:149.00px;font-size:12px;line-height:14px;color:#323232;letter-spacing:0.060px;">90267.02</span>
<span class="t s" style="left:433.90px;top:149.00px;font-size:12px;line-height:14px;color:#323232;letter-spacing:0.341px;">73113.46999999999</span>
<span class="t s" style="left:575.50px;top:149.00px;font-size:12px;line-height:14px;color:#323232;letter-spacing:0.210px;">81667.85999999999</span>
<span class="t s" style="left:715.10px;top:149.00px;font-size:12px;line-height:14px;color:#323232;letter-spacing:0.050px;">22192.64</span>
<div class="b" style="left:0px;top:58px;width:754.7px;height:1px;background:#e6e6e6;"></div>
<div class="b" style="left:0px;top:86px;width:754.7px;height:1px;background:#e6e6e6;"></div>
<div class="b" style="left:0px;top:114px;width:754.7px;height:1px;background:#e6e6e6;"></div>
<div class="b" style="left:0px;top:142px;width:754.7px;height:1px;background:#e6e6e6;"></div></div>
</body></html>
